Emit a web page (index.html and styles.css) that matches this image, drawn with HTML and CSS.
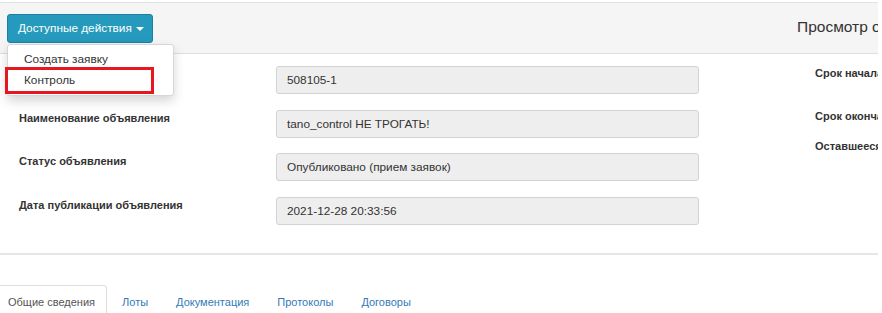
FILE: index.html
```html
<!DOCTYPE html>
<html lang="ru">
<head>
<meta charset="utf-8">
<link rel="stylesheet" href="styles.css">
</head>
<body>
<div class="page">
  <div class="panel">
    <div class="panel-heading">
      <div class="actions">
        <button class="btn-actions">Доступные действия <span class="caret"></span></button>
        <ul class="dropdown">
          <li>Создать заявку</li>
          <li>Контроль</li>
        </ul>
        <div class="highlight"></div>
      </div>
      <div class="title">Просмотр объявления</div>
    </div>
    <div class="panel-body">
      <div class="form">
        <div class="row"><label>Номер объявления</label><div class="field">508105-1</div></div>
        <div class="row"><label>Наименование объявления</label><div class="field">tano_control НЕ ТРОГАТЬ!</div></div>
        <div class="row"><label>Статус объявления</label><div class="field">Опубликовано (прием заявок)</div></div>
        <div class="row"><label>Дата публикации объявления</label><div class="field">2021-12-28 20:33:56</div></div>
      </div>
      <div class="side">
        <div class="side-item first">Срок начала приема заявок</div>
        <div class="side-item second">Срок окончания приема заявок</div>
        <div class="side-item third">Оставшееся время</div>
      </div>
    </div>
  </div>
  <ul class="tabs">
    <li class="active">Общие сведения</li>
    <li>Лоты</li>
    <li>Документация</li>
    <li>Протоколы</li>
    <li>Договоры</li>
  </ul>
</div>
</body>
</html>
```
FILE: styles.css
```css
html, body {
  margin: 0;
  padding: 0;
  background: #fff;
}
body {
  font-family: "Liberation Sans", Arial, sans-serif;
  color: #333;
  font-size: 11px;
  width: 882px;
  height: 313px;
  overflow: hidden;
}
.page {
  width: 878px;
  overflow: hidden;
  padding-top: 2px;
}
.panel {
  border-bottom: 2px solid #e6e6e6;
}
.panel-heading {
  height: 50px;
  background: #f5f5f5;
  border-top: 1px solid #e3e3e3;
  border-bottom: 1px solid #dedede;
  display: flex;
  align-items: center;
  position: relative;
}
.actions {
  margin-left: 7px;
  position: relative;
}
.btn-actions {
  display: block;
  height: 29px;
  margin-top: 1px;
  padding: 0 0 0 10px;
  background: #269abc;
  border: 1px solid #1f7fa0;
  border-radius: 3px;
  color: #fff;
  font-family: inherit;
  font-size: 11.8px;
  line-height: 27px;
  width: 146px;
  text-align: left;
}
.caret {
  display: inline-block;
  width: 0;
  height: 0;
  margin-left: 1px;
  vertical-align: middle;
  border-top: 4px solid #fff;
  border-left: 4px solid transparent;
  border-right: 4px solid transparent;
}
.dropdown {
  position: absolute;
  top: 31px;
  left: 0;
  z-index: 10;
  width: 165px;
  margin: 0;
  padding: 4px 0;
  list-style: none;
  background: #fff;
  border: 1px solid #d6d6d6;
  border-radius: 3px;
  box-shadow: 0 5px 11px rgba(0, 0, 0, 0.17);
  font-size: 11.8px;
}
.dropdown li {
  height: 21px;
  line-height: 21px;
  padding-left: 16px;
  color: #333;
}
.highlight {
  position: absolute;
  z-index: 11;
  left: -2px;
  top: 54px;
  width: 143px;
  height: 21px;
  border: 3px solid #e8161e;
}
.title {
  position: absolute;
  left: 797px;
  top: 15px;
  white-space: nowrap;
  font-size: 15.5px;
  color: #333;
}
.panel-body {
  display: flex;
  padding: 12px 0 28px 19px;
}
.form {
  width: 680px;
}
.row {
  display: grid;
  grid-template-columns: 257px 423px;
  margin-bottom: 15.7px;
}
.row:last-child {
  margin-bottom: 0;
}
.row label {
  font-weight: bold;
  padding-top: 1px;
  line-height: 14px;
}
.field {
  height: 26px;
  line-height: 26px;
  padding: 0 10px;
  background: #eee;
  border: 1px solid #d3d3d3;
  border-radius: 3px;
  font-size: 11.8px;
}
.side {
  margin-left: 116px;
  font-weight: bold;
  white-space: nowrap;
}
.side-item {
  line-height: 14px;
}
.first { margin-top: 0; }
.second { margin-top: 29px; }
.third { margin-top: 16px; }
.tabs {
  display: flex;
  margin: 30px 0 0 -6px;
  padding: 0;
  list-style: none;
  font-size: 11px;
}
.tabs li {
  height: 28px;
  line-height: 33px;
  padding: 0 12px;
  margin-right: 2px;
  color: #337ab7;
  border: 1px solid transparent;
  border-bottom: 0;
}
.tabs li.active {
  color: #555;
  border-color: #ddd;
  border-radius: 4px 4px 0 0;
  padding: 0 11px 0 13px;
}
```
